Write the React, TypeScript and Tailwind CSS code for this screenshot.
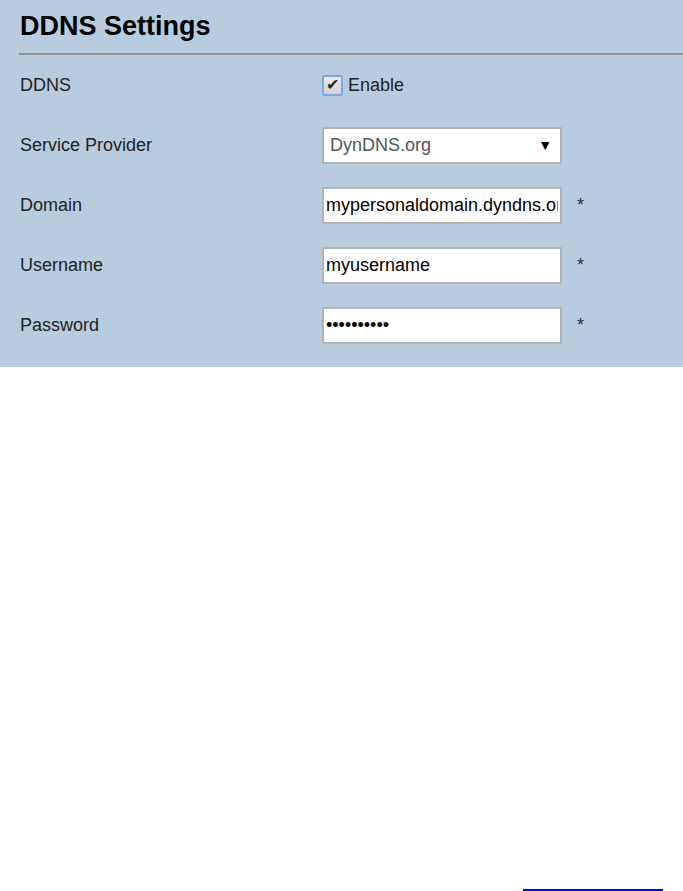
const font = { fontFamily: '"Liberation Sans", Arial, sans-serif' };

function Row({ label, children }: { label: string; children: React.ReactNode }) {
  return (
    <div className="flex h-[60px] items-center">
      <div className="w-[302px] shrink-0 text-[18px] text-[#222]">{label}</div>
      <div className="flex items-center">{children}</div>
    </div>
  );
}

function TextBox({ value, password }: { value: string; password?: boolean }) {
  return (
    <>
      <input
        readOnly
        type={password ? 'password' : 'text'}
        value={value}
        className="h-[37px] w-[240px] border-2 border-[#b3b3b3] bg-white px-[2px] text-[18px] text-black outline-none"
        style={font}
      />
      <span className="ml-[15px] text-[18px] text-[#333]">*</span>
    </>
  );
}

export default function App() {
  return (
    <div className="flex h-[891px] flex-col bg-white" style={font}>
      <div className="bg-[#b8cce0] pb-[12px] pl-5">
        <div className="flex h-[53px] items-center">
          <h1 className="text-[27px] font-bold leading-none text-black">DDNS Settings</h1>
        </div>
        <div className="-ml-px h-[2px] bg-[#8f9296]" />
        <div>
          <Row label="DDNS">
            <div className="flex items-center">
              <span className="flex h-[21px] w-[21px] items-center justify-center rounded-[3px] border-2 border-[#7ea6ea] bg-gradient-to-b from-[#ececec] to-[#d2d2d2] text-[16px] leading-none text-[#2a2a2a]">
                ✔
              </span>
              <span className="ml-[5px] text-[18px] text-[#222]">Enable</span>
            </div>
          </Row>
          <Row label="Service Provider">
            <div className="flex h-[37px] w-[240px] items-center justify-between border-2 border-[#b3b3b3] bg-white pl-[6px] pr-[8px]">
              <span className="text-[18px] text-[#555]">DynDNS.org</span>
              <span className="text-[14px] text-black">▼</span>
            </div>
          </Row>
          <Row label="Domain">
            <TextBox value="mypersonaldomain.dyndns.org" />
          </Row>
          <Row label="Username">
            <TextBox value="myusername" />
          </Row>
          <Row label="Password">
            <TextBox value="mypasswd01" password />
          </Row>
        </div>
      </div>
      <div className="flex-1" />
      <div className="pl-[523px]">
        <div className="h-[2px] w-[140px] bg-[#0000ff]" />
      </div>
    </div>
  );
}
